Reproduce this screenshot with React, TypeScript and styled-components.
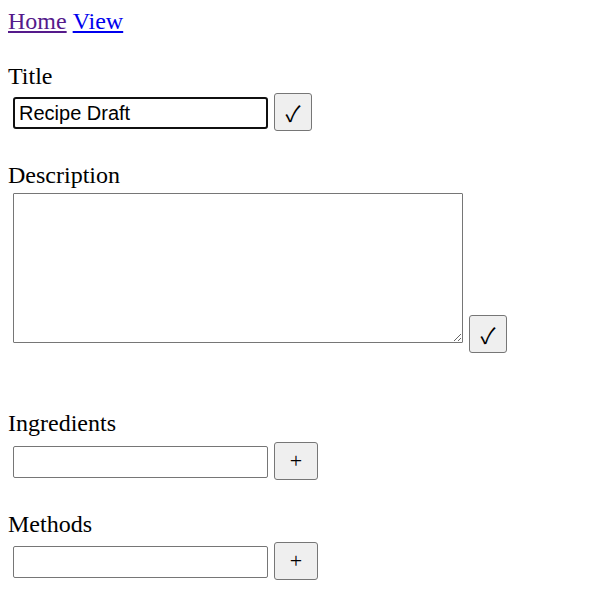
import React from 'react';
import styled, { createGlobalStyle } from 'styled-components';

// ============================================
// GLOBAL
// ============================================

const GlobalStyle = createGlobalStyle`
  html, body {
    margin: 0;
    padding: 0;
    background: #ffffff;
  }
  body {
    padding: 8px;
    font-family: "Liberation Serif", "Times New Roman", serif;
    font-size: 24px;
    color: #000000;
  }
`;

// ============================================
// STYLED COMPONENTS
// ============================================

const Page = styled.div`
  display: flex;
  flex-direction: column;
`;

const Nav = styled.nav`
  display: flex;
  gap: 6px;
  line-height: 27px;
  height: 28px;
`;

const NavLink = styled.a<{ $visited?: boolean }>`
  color: ${(props) => (props.$visited ? '#551a8b' : '#0000ee')};
  text-decoration: underline;
  text-underline-offset: 2px;
  cursor: pointer;
`;

const Section = styled.section<{ $top: number }>`
  display: flex;
  flex-direction: column;
  margin-top: ${(props) => props.$top}px;
`;

const Label = styled.label`
  display: block;
  line-height: 28px;
  height: 28px;
`;

const Row = styled.div<{ $top: number }>`
  display: flex;
  align-items: flex-end;
  gap: 6px;
  padding-left: 5px;
  margin-top: ${(props) => props.$top}px;
`;

const TextInput = styled.input<{ $active?: boolean }>`
  box-sizing: border-box;
  width: 255px;
  height: 32px;
  margin: 0 0 2px 0;
  padding: 0 4px;
  font-family: "Liberation Sans", Arial, sans-serif;
  font-size: 20px;
  color: #000000;
  caret-color: #000000;
  background: #ffffff;
  border: ${(props) => (props.$active ? '2px solid #101010' : '1px solid #767676')};
  border-radius: ${(props) => (props.$active ? '3px' : '2px')};
  outline: none;
`;

const TextArea = styled.textarea`
  box-sizing: border-box;
  width: 450px;
  height: 150px;
  margin: 0 0 10px 0;
  padding: 2px;
  font-family: "Liberation Mono", monospace;
  font-size: 20px;
  background: #ffffff;
  border: 1px solid #767676;
  border-radius: 1px;
  outline: none;
  resize: both;
`;

const ActionButton = styled.button<{ $wide?: boolean }>`
  box-sizing: border-box;
  width: ${(props) => (props.$wide ? '44px' : '38px')};
  height: 38px;
  padding: 0;
  display: flex;
  align-items: center;
  justify-content: center;
  font-family: ${(props) =>
    props.$wide
      ? '"Liberation Serif", serif'
      : '"Noto Sans CJK JP", "DejaVu Sans", sans-serif'};
  font-size: 22px;
  font-weight: 400;
  line-height: 1;
  color: #000000;
  background: #efefef;
  border: 1px solid #767676;
  border-radius: 3px;
  cursor: pointer;
`;

// ============================================
// APP
// ============================================

export default function App() {
  return (
    <>
      <GlobalStyle />
      <Page>
        <Nav>
          <NavLink $visited>Home</NavLink>
          <NavLink>View</NavLink>
        </Nav>

        <Section $top={26}>
          <Label>Title</Label>
          <Row $top={3}>
            <TextInput $active defaultValue="Recipe Draft" />
            <ActionButton>✓</ActionButton>
          </Row>
        </Section>

        <Section $top={30}>
          <Label>Description</Label>
          <Row $top={4}>
            <TextArea />
            <ActionButton>✓</ActionButton>
          </Row>
        </Section>

        <Section $top={56}>
          <Label>Ingredients</Label>
          <Row $top={5}>
            <TextInput />
            <ActionButton $wide>+</ActionButton>
          </Row>
        </Section>

        <Section $top={30}>
          <Label>Methods</Label>
          <Row $top={4}>
            <TextInput />
            <ActionButton $wide>+</ActionButton>
          </Row>
        </Section>
      </Page>
    </>
  );
}
